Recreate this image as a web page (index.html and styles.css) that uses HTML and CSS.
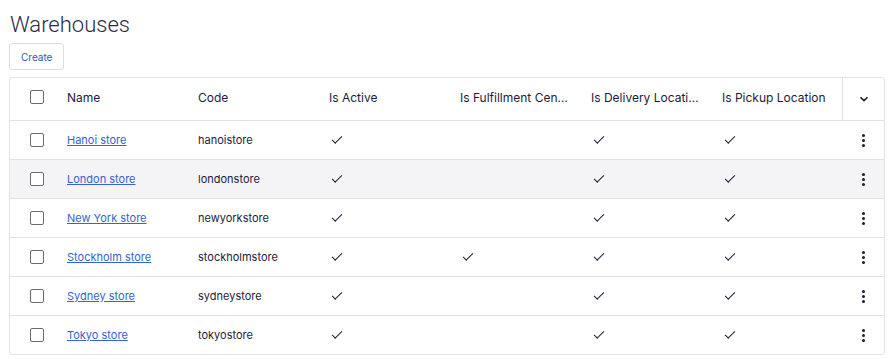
FILE: index.html
```html
<!DOCTYPE html>
<html lang="en">

<head>
    <meta charset="UTF-8">
    <meta name="viewport" content="width=device-width, initial-scale=1.0">
    <title>Warehouses</title>
    <link rel="stylesheet" href="styles.css">
</head>

<body>
    <h1 class="title">Warehouses</h1>
    <div class="toolbar">
        <button class="btn">Create</button>
    </div>

    <div class="grid">
        <div class="row head">
            <div class="cell sel"><span class="box"></span></div>
            <div class="cell">Name</div>
            <div class="cell">Code</div>
            <div class="cell">Is Active</div>
            <div class="cell">Is Fulfillment Center</div>
            <div class="cell">Is Delivery Location</div>
            <div class="cell">Is Pickup Location</div>
            <div class="cell act">
                <svg width="10" height="6" viewBox="0 0 10 6"><path d="M1.5 1.2 5 4.6 8.5 1.2" fill="none" stroke="#1c1c3a" stroke-width="1.6"/></svg>
            </div>
        </div>

        <div class="row">
            <div class="cell sel"><span class="box"></span></div>
            <div class="cell"><a href="#">Hanoi store</a></div>
            <div class="cell">hanoistore</div>
            <div class="cell"><i class="tick"></i></div>
            <div class="cell"></div>
            <div class="cell"><i class="tick"></i></div>
            <div class="cell"><i class="tick"></i></div>
            <div class="cell act"><i class="kebab"></i></div>
        </div>

        <div class="row hover">
            <div class="cell sel"><span class="box"></span></div>
            <div class="cell"><a href="#">London store</a></div>
            <div class="cell">londonstore</div>
            <div class="cell"><i class="tick"></i></div>
            <div class="cell"></div>
            <div class="cell"><i class="tick"></i></div>
            <div class="cell"><i class="tick"></i></div>
            <div class="cell act"><i class="kebab"></i></div>
        </div>

        <div class="row">
            <div class="cell sel"><span class="box"></span></div>
            <div class="cell"><a href="#">New York store</a></div>
            <div class="cell">newyorkstore</div>
            <div class="cell"><i class="tick"></i></div>
            <div class="cell"></div>
            <div class="cell"><i class="tick"></i></div>
            <div class="cell"><i class="tick"></i></div>
            <div class="cell act"><i class="kebab"></i></div>
        </div>

        <div class="row">
            <div class="cell sel"><span class="box"></span></div>
            <div class="cell"><a href="#">Stockholm store</a></div>
            <div class="cell">stockholmstore</div>
            <div class="cell"><i class="tick"></i></div>
            <div class="cell"><i class="tick"></i></div>
            <div class="cell"><i class="tick"></i></div>
            <div class="cell"><i class="tick"></i></div>
            <div class="cell act"><i class="kebab"></i></div>
        </div>

        <div class="row">
            <div class="cell sel"><span class="box"></span></div>
            <div class="cell"><a href="#">Sydney store</a></div>
            <div class="cell">sydneystore</div>
            <div class="cell"><i class="tick"></i></div>
            <div class="cell"></div>
            <div class="cell"><i class="tick"></i></div>
            <div class="cell"><i class="tick"></i></div>
            <div class="cell act"><i class="kebab"></i></div>
        </div>

        <div class="row">
            <div class="cell sel"><span class="box"></span></div>
            <div class="cell"><a href="#">Tokyo store</a></div>
            <div class="cell">tokyostore</div>
            <div class="cell"><i class="tick"></i></div>
            <div class="cell"></div>
            <div class="cell"><i class="tick"></i></div>
            <div class="cell"><i class="tick"></i></div>
            <div class="cell act"><i class="kebab"></i></div>
        </div>
    </div>
</body>

</html>
```

FILE: styles.css
```css
body {
    margin: 0;
    padding: 0 7px 0 9px;
    background: #fff;
    color: #1c1c3a;
    font-family: Inter, "Noto Sans", sans-serif;
}

.title {
    margin: 0;
    padding: 11px 0 0 1px;
    height: 32px;
    font-family: Roboto, sans-serif;
    font-weight: 300;
    font-size: 22px;
    line-height: 28px;
    color: #2a2a48;
}

.toolbar {
    height: 34px;
}

.btn {
    height: 27px;
    padding: 0 11px;
    background: #fff;
    border: 1px solid #dcdce0;
    border-radius: 3px;
    font-family: Inter, sans-serif;
    font-size: 10px;
    color: #2f55c8;
}

.grid {
    border: 1px solid #e2e2e6;
    border-radius: 3px;
}

.row {
    display: grid;
    grid-template-columns: 46px repeat(6, 131px) 1fr;
    height: 38px;
    border-top: 1px solid #e2e2e6;
    font-size: 11px;
}

.row.head {
    height: 42px;
    border-top: 0;
    font-size: 12px;
}

.row.hover {
    background: #f4f4f7;
}

.cell {
    display: flex;
    align-items: center;
    padding: 0 11px;
    white-space: nowrap;
    overflow: hidden;
}

.row.head .cell {
    display: block;
    line-height: 40px;
    text-overflow: ellipsis;
}

.cell.sel {
    padding: 0 0 0 20px;
}

.row.head .cell.act,
.cell.act {
    display: flex;
    justify-content: center;
    padding: 0;
}

.row.head .cell.act {
    border-left: 1px solid #e2e2e6;
}

.box {
    display: block;
    width: 12px;
    height: 12px;
    border: 1px solid #6b6b78;
    border-radius: 2px;
    background: #fff;
}

.row.head .box {
    margin-top: 12px;
}

a {
    color: #3563d0;
    text-decoration: underline;
}

.tick {
    display: block;
    width: 9px;
    height: 4px;
    margin: 0 0 4px 3px;
    border-left: 1.2px solid #1c1c3a;
    border-bottom: 1.2px solid #1c1c3a;
    transform: rotate(-45deg);
}

.kebab {
    display: block;
    width: 3px;
    height: 3px;
    border-radius: 50%;
    background: #1c1c3a;
    box-shadow: 0 -5px 0 #1c1c3a, 0 5px 0 #1c1c3a;
}
```
